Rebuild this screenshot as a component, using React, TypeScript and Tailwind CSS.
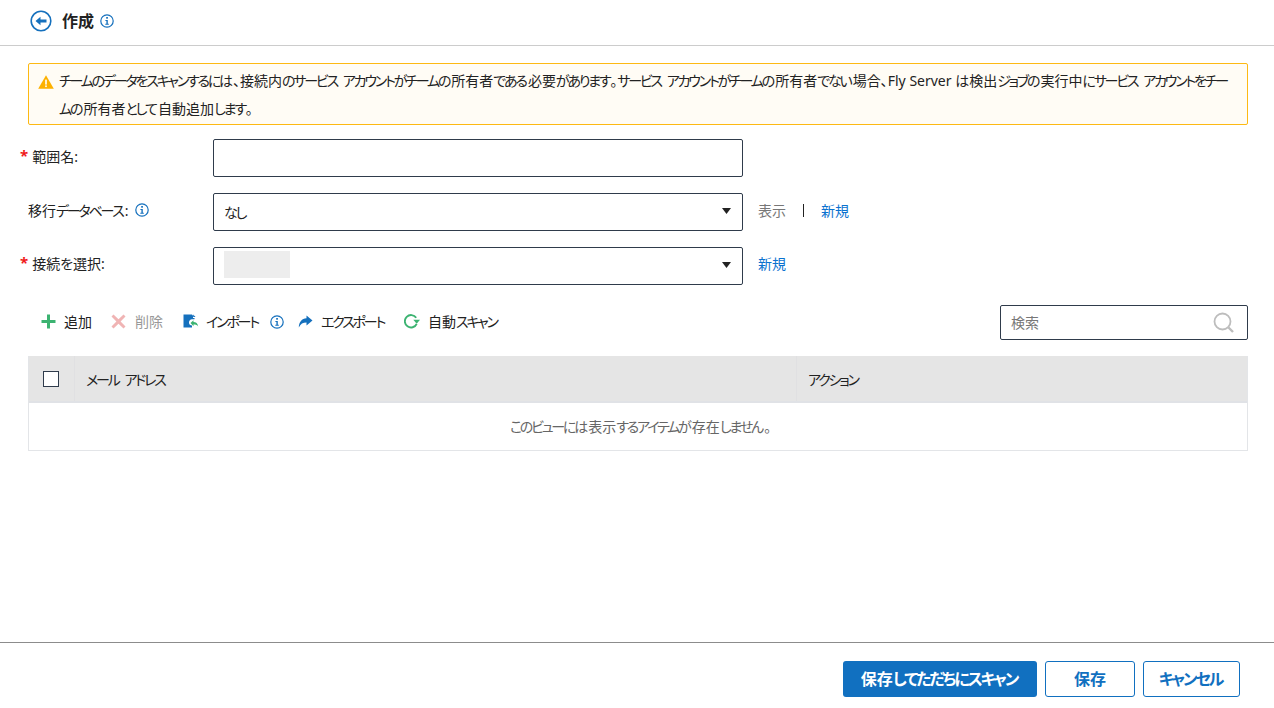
import React from "react";

function K({ t, big = false }: { t: string; big?: boolean }) {
  const parts = t.split(/([\u3040-\u30ff]+)/).filter(Boolean);
  return (
    <>
      {parts.map((p, i) =>
        /[\u3040-\u30ff]/.test(p) ? (
          <span key={i}>
            {p.length > 1 && (
              <span className={big ? "tracking-[-2.1px]" : "tracking-[-2.2px]"}>{p.slice(0, -1)}</span>
            )}
            <span>{p.slice(-1)}</span>
          </span>
        ) : (
          <span key={i}>{p}</span>
        )
      )}
    </>
  );
}

function Info({ className = "" }: { className?: string }) {
  return (
    <svg width="14" height="14" viewBox="0 0 14 14" className={`shrink-0 ${className}`} fill="none">
      <circle cx="7" cy="7" r="6.2" stroke="#1570bd" strokeWidth="1.2" />
      <rect x="6.2" y="3" width="1.7" height="1.7" fill="#1570bd" />
      <path d="M5.4 6h2.4v3.8h1v1H5.3v-1h1.1V7h-1z" fill="#1570bd" />
    </svg>
  );
}

function Caret() {
  return (
    <svg width="9" height="6" viewBox="0 0 9 6" className="shrink-0 mb-[2px]">
      <path d="M0 0h9L4.500 6z" fill="#222" />
    </svg>
  );
}

function Star() {
  return <span className="text-[#f01c1c] text-[15px] font-bold mr-[4px] leading-none relative top-[-1px]">*</span>;
}

export default function App() {
  return (
    <div className="w-[1274px] h-[708px] bg-white flex flex-col overflow-hidden text-[14px] text-[#222] [font-feature-settings:'palt'] font-['Noto_Sans','Noto_Sans_CJK_JP',sans-serif]">
      <header className="h-[46px] shrink-0 border-b border-[#cccccc] flex items-center pl-[30px] pb-[3px]">
        <svg width="22" height="22" viewBox="0 0 22 22" fill="none" className="mr-[10px]">
          <circle cx="11" cy="11" r="9.800" stroke="#1570bd" strokeWidth="1.600" />
          <path d="M5.500 11 10.500 6.800v2.700h6v3h-6v2.700z" fill="#1570bd" />
        </svg>
        <span className="font-bold text-[16px] text-[#222] mr-[6px]">作成</span>
        <Info />
      </header>

      <main className="flex-1 flex flex-col px-[28px] pr-[26px] min-h-0">
        <div className="mt-[17px] h-[62px] bg-[#fffcf5] border border-[#fdb913] rounded-[2px] pl-[9px] pr-[14px] pt-[3px] flex items-start">
          <svg width="16" height="14" viewBox="0 0 16 14" className="shrink-0 mt-[8px] mr-[5px]">
            <path d="M8 0.300 15.800 13.700H0.200z" fill="#fdb100" />
            <rect x="7.200" y="4.600" width="1.600" height="5" fill="#fff" />
            <rect x="7.200" y="10.400" width="1.600" height="1.700" fill="#fff" />
          </svg>
          <div className="text-[14px] leading-[28px] text-[#222] whitespace-nowrap">
            <div><K t="チームのデータをスキャンするには、接続内のサービス アカウントがチームの所有者である必要があります。サービス アカウントがチームの所有者でない場合、Fly Server は検出ジョブの実行中にサービス アカウントをチー" /></div>
            <div><K t="ムの所有者として自動追加します。" /></div>
          </div>
        </div>

        <div className="mt-[14px] flex items-center h-[38px]">
          <label className="w-[185px] flex items-center -ml-[8px] mr-[8px] pb-[3px]"><Star /><K t="範囲名:" /></label>
          <div className="w-[530px] h-[38px] border border-[#2f3b4b] rounded-[2px]" />
        </div>

        <div className="mt-[16px] flex items-center h-[38px]">
          <label className="w-[185px] flex items-center pb-[4px]"><span><K t="移行データベース:" /></span><Info className="ml-[6px]" /></label>
          <div className="w-[530px] h-[38px] border border-[#2f3b4b] rounded-[2px] flex items-center justify-between pl-[10px] pr-[11px]">
            <span><K t="なし" /></span>
            <Caret />
          </div>
          <div className="flex items-center ml-[15px] pb-[4px]">
            <span className="text-[#777]">表示</span>
            <span className="w-[1px] h-[13px] bg-[#222] mx-[17px]" />
            <span className="text-[#0a72cf]">新規</span>
          </div>
        </div>

        <div className="mt-[16px] flex items-center h-[38px]">
          <label className="w-[185px] flex items-center -ml-[8px] mr-[8px] pb-[6px]"><Star /><span><K t="接続を選択:" /></span></label>
          <div className="w-[530px] h-[38px] border border-[#2f3b4b] rounded-[2px] flex items-center justify-between pl-[10px] pr-[11px]">
            <div className="w-[66px] h-[27px] bg-[#ededed] mb-[3px]" />
            <Caret />
          </div>
          <span className="text-[#0a72cf] ml-[15px] pb-[6px]">新規</span>
        </div>

        <div className="mt-[19px] h-[36px] flex items-center justify-between">
          <div className="flex items-center pl-[13px] pb-[1px]">
            <svg width="15" height="15" viewBox="0 0 15 15" className="mr-[8px]">
              <path d="M6 0.500h3V6h5.500v3H9v5.500H6V9H0.500V6H6z" fill="#3cb371" />
            </svg>
            <span className="w-[28px]">追加</span>
            <svg width="15" height="15" viewBox="0 0 15 15" className="ml-[19px] mr-[9px]">
              <path d="M0.500 2.500 2.500 0.500l5 4.800 5-4.800 2 2-4.900 5 4.900 5-2 2-5-4.800-5 4.800-2-2 4.900-5z" fill="#f0b4b4" />
            </svg>
            <span className="w-[28px] text-[#999]">削除</span>
            <svg width="16" height="16" viewBox="0 0 16 16" className="ml-[20px] mr-[7px]">
              <path d="M0.500 0.500H9L10 1.800V4h1.500v1.300H9c-1.800 0-3 1.400-3 3.200s1.200 3 3 3V13.500H0.500z" fill="#1570bd" />
              <path d="M10.200 0.500 12.500 3H10.200z" fill="#1570bd" />
              <path d="M7.500 9 10.500 6.300v1.700c2.500 0 4.300 1.400 4.700 4.500-.8-1.500-2.400-2-4.700-2v1.700z" fill="#3cb371" />
            </svg>
            <span className="w-[54px] whitespace-nowrap"><K t="インポート" /></span>
            <Info className="ml-[10px]" />
            <svg width="15" height="13" viewBox="0 0 15 13" className="ml-[14px] mr-[8px]">
              <path d="M8.500 0.500 14.500 5.500 8.500 10.500V7.500C5 7.500 2.500 8.800 0.800 12.500 1 7 3.800 3.500 8.500 3.200z" fill="#1570bd" />
            </svg>
            <span className="w-[65px] whitespace-nowrap"><K t="エクスポート" /></span>
            <svg width="16" height="15" viewBox="0 0 16 15" fill="none" className="ml-[18px] mr-[8px]">
              <path d="M12.700 9.800A6.200 6.200 0 1 1 12.200 3.800" stroke="#3cb371" strokeWidth="1.900" />
              <path d="M9.300 5.700H16l-3.300 4z" fill="#3cb371" />
            </svg>
            <span className="whitespace-nowrap"><K t="自動スキャン" /></span>
          </div>
          <div className="w-[248px] h-[35px] border border-[#2f3b4b] rounded-[2px] flex items-center justify-between pl-[10px] pr-[13px]">
            <span className="text-[#777]">検索</span>
            <svg width="21" height="21" viewBox="0 0 21 21" fill="none">
              <circle cx="9.500" cy="9.500" r="8" stroke="#bdbdbd" strokeWidth="1.800" />
              <path d="M15.500 15.500 20 20" stroke="#bdbdbd" strokeWidth="2.400" />
            </svg>
          </div>
        </div>

        <div className="mt-[16px] border border-[#e3e5e8]">
          <div className="h-[47px] bg-[#e5e5e5] flex items-center border-b-2 border-[#e0e2e6] -mt-px">
            <div className="w-[46px] h-full flex items-center justify-center border-r border-[#e0e0e2] pr-[1px]">
              <div className="w-[16px] h-[16px] bg-white border border-[#2f3b4b]" />
            </div>
            <div className="w-[722px] h-full flex items-center pl-[11px] pt-[1px] border-r border-[#e0e0e2]"><span><K t="メール アドレス" /></span></div>
            <div className="pl-[11px] pt-[1px]"><K t="アクション" /></div>
          </div>
          <div className="h-[47px] flex items-center justify-center text-[#666] pl-[5px]">
            <span><K t="このビューには表示するアイテムが存在しません。" /></span>
          </div>
        </div>
      </main>

      <footer className="h-[66px] shrink-0 border-t border-[#8c8c8c] flex items-start justify-end gap-[8px] pt-[18px] pr-[34px] text-[16px] font-bold">
        <button className="w-[194px] h-[36px] bg-[#1170c0] rounded-[3px] text-white"><K big t="保存してただちにスキャン" /></button>
        <button className="w-[90px] h-[36px] border border-[#1170c0] rounded-[3px] text-[#1170c0]">保存</button>
        <button className="w-[97px] h-[36px] border border-[#1170c0] rounded-[3px] text-[#1170c0]"><K big t="キャンセル" /></button>
      </footer>
    </div>
  );
}
